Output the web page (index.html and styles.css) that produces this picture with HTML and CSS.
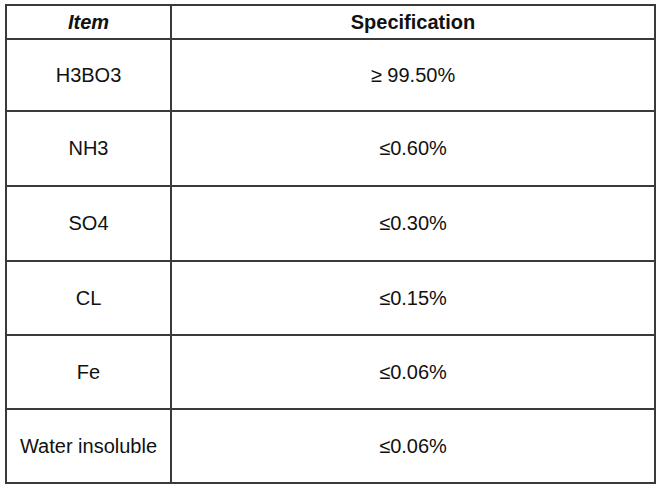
FILE: index.html
```html
<!DOCTYPE html>
<html>
<head>
<meta charset="utf-8">
<link rel="stylesheet" href="styles.css">
</head>
<body>
<table class="spec">
  <colgroup><col class="c1"><col class="c2"></colgroup>
  <tr class="head"><th class="item">Item</th><th>Specification</th></tr>
  <tr class="r1"><td>H3BO3</td><td>≥ 99.50%</td></tr>
  <tr class="r2"><td>NH3</td><td>≤0.60%</td></tr>
  <tr class="r2"><td>SO4</td><td>≤0.30%</td></tr>
  <tr class="r3"><td>CL</td><td>≤0.15%</td></tr>
  <tr class="r3"><td>Fe</td><td>≤0.06%</td></tr>
  <tr class="r3"><td>Water insoluble</td><td>≤0.06%</td></tr>
</table>
</body>
</html>
```
FILE: styles.css
```css
html, body {
  margin: 0;
  padding: 0;
  background: #fff;
}
body {
  padding: 4px 0 0 5px;
}
.spec {
  border-collapse: collapse;
  table-layout: fixed;
  width: 649px;
  font-family: "Liberation Sans", Arial, sans-serif;
  font-size: 20px;
  color: #111;
}
.c1 { width: 165px; }
.c2 { width: 484px; }
.spec th, .spec td {
  border: 2px solid #3a3a3a;
  padding: 0;
  text-align: center;
  vertical-align: middle;
}
.spec th {
  font-weight: bold;
}
.spec th.item {
  font-style: italic;
}
.head { height: 34px; }
.r1 { height: 72px; }
.r2 { height: 75px; }
.r3 { height: 74px; }
```
